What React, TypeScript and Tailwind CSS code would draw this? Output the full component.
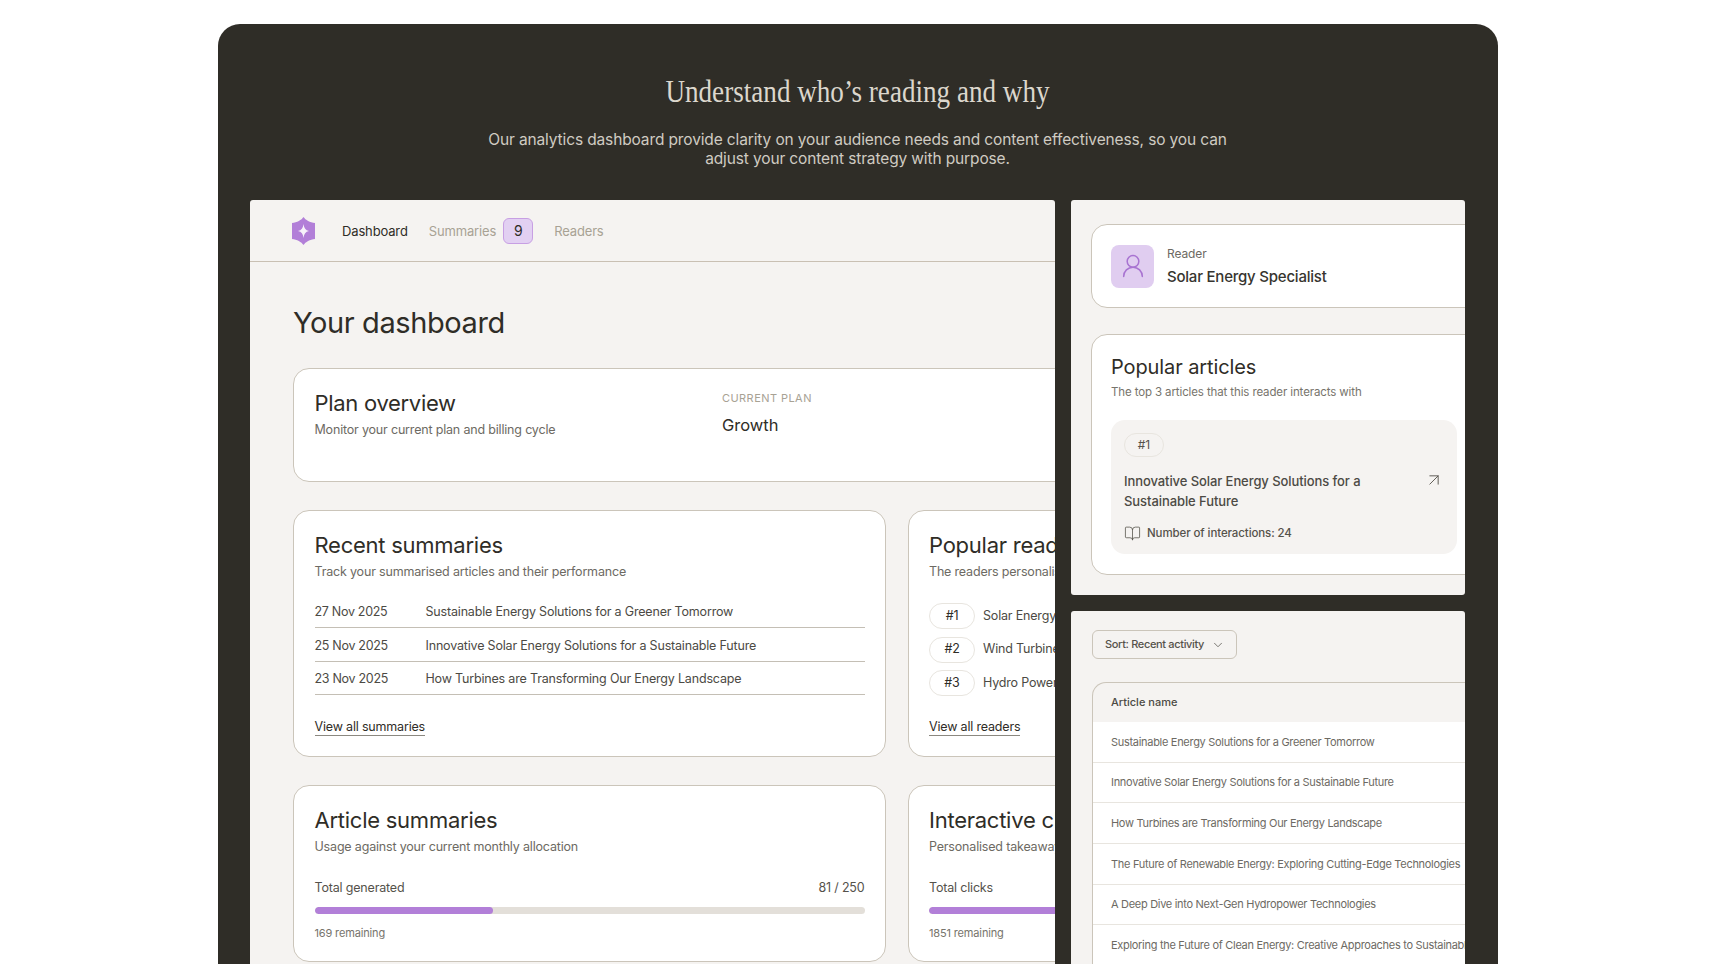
import { ArrowUpRight, BookOpen, ChevronDown, UserRound } from 'lucide-react';
import { ReactNode } from 'react';

const recent = [
  ['27 Nov 2025', 'Sustainable Energy Solutions for a Greener Tomorrow'],
  ['25 Nov 2025', 'Innovative Solar Energy Solutions for a Sustainable Future'],
  ['23 Nov 2025', 'How Turbines are Transforming Our Energy Landscape'],
];

const readers = ['Solar Energy Specialist', 'Wind Turbine Engineer', 'Hydro Power Analyst'];

const articles = [
  'Sustainable Energy Solutions for a Greener Tomorrow',
  'Innovative Solar Energy Solutions for a Sustainable Future',
  'How Turbines are Transforming Our Energy Landscape',
  'The Future of Renewable Energy: Exploring Cutting-Edge Technologies',
  'A Deep Dive into Next-Gen Hydropower Technologies',
  'Exploring the Future of Clean Energy: Creative Approaches to Sustainable Power',
];

function Logo() {
  return (
    <svg width="23" height="28" viewBox="0 0 23 28" aria-hidden="true">
      <path d="M11.5 0 C13.5 3 18 5.6 23 6 L23 22 C18 22.4 13.5 25 11.5 28 C9.5 25 5 22.4 0 22 L0 6 C5 5.6 9.5 3 11.5 0 Z" fill="#b27fd8" />
      <path d="M11.5 7 C12 11 13.5 13.3 17 14 C13.5 14.7 12 17 11.5 21 C11 17 9.5 14.7 6 14 C9.5 13.3 11 11 11.5 7 Z" fill="#f7f3fa" />
    </svg>
  );
}

function Card({ title, sub, children }: { title: string; sub: string; children: ReactNode }) {
  return (
    <section className="h-full rounded-2xl border border-[#cbc5ba] bg-white px-[20.5px] pt-[20px]">
      <h2 className="text-[22px] leading-[28px] tracking-[-0.25px] text-[#2f2d27]">{title}</h2>
      <p className="mt-[4px] text-[12.5px] leading-[18px] tracking-[-0.18px] text-[#6d6a63]">{sub}</p>
      {children}
    </section>
  );
}

function Usage({ label, value, pct, left }: { label: string; value: string; pct: string; left: string }) {
  return (
    <>
      <div className="mt-[23px] flex justify-between text-[12.5px] leading-[18px] tracking-[-0.18px] text-[#55524b]">
        <span>{label}</span>
        <span>{value}</span>
      </div>
      <div className="mt-[10px] h-[7px] overflow-hidden rounded-sm bg-[#e3dfd9]">
        <div className={pct + ' h-full rounded-sm bg-[#b27fd8]'} />
      </div>
      <p className="mt-[11px] text-[11px] leading-[16px] tracking-[-0.15px] text-[#77746c]">{left}</p>
    </>
  );
}

export default function App() {
  return (
    <div className="h-[964px] overflow-hidden bg-white pt-[24px] font-['Inter',sans-serif] text-[#2f2d27]">
      <div className="ml-[218px] h-[1000px] w-[1280px] rounded-[22px] bg-[#2f2d27] pl-[32px] pt-[48px]">
        <div className="w-[1215px]">
          <h1 className="scale-x-[0.875] text-center font-['Liberation_Serif',serif] text-[31px] leading-[40px] text-[#dcd7cd]">
            Understand who’s reading and why
          </h1>
          <p className="mx-auto mt-[18px] w-[760px] text-center text-[15.5px] leading-[19px] tracking-[-0.13px] text-[#cfcbc2]">
            Our analytics dashboard provide clarity on your audience needs and content effectiveness, so you can adjust your content strategy with purpose.
          </p>
        </div>

        <div className="mt-[32px] flex gap-[16px]">
          {/* left app window */}
          <div className="h-[800px] w-[805px] shrink-0 overflow-hidden rounded-t-[3px] bg-[#f5f3f1]">
            <nav className="flex h-[62px] items-center gap-[21px] border-b border-[#c9c0b3] pl-[42px] text-[13px] tracking-[-0.15px]">
              <div className="mr-[6px]"><Logo /></div>
              <span className="pt-[2px] text-[#2f2d27]">Dashboard</span>
              <span className="flex items-center gap-[7px] text-[#a8a294]">
                <span className="pt-[2px]">Summaries</span>
                <span className="flex h-[26px] w-[30px] items-center justify-center rounded-[6px] border border-[#c79fe3] bg-[#e2d0f2] text-[14px] text-[#2f2d27]">9</span>
              </span>
              <span className="pt-[2px] text-[#a8a294]">Readers</span>
            </nav>

            <main className="w-[1300px] pl-[43px]">
              <h2 className="mt-[43px] text-[29px] leading-[36px] tracking-[-0.4px] text-[#2f2d27]">Your dashboard</h2>

              <section className="mt-[27px] flex h-[114px] w-[1208px] rounded-2xl border border-[#cbc5ba] bg-white px-[20.5px] pt-[20px]">
                <div className="w-[407.5px]">
                  <h3 className="text-[22px] leading-[28px] tracking-[-0.3px]">Plan overview</h3>
                  <p className="mt-[4px] text-[12.5px] leading-[18px] tracking-[-0.18px] text-[#6d6a63]">Monitor your current plan and billing cycle</p>
                </div>
                <div>
                  <p className="mt-[1px] text-[11px] leading-[16px] tracking-[0.04em] text-[#a8a294]">CURRENT PLAN</p>
                  <p className="mt-[8px] text-[16.5px] leading-[22px]">Growth</p>
                </div>
              </section>

              <div className="mt-[28px] grid w-[1208px] grid-cols-[593px_593px] gap-x-[21.5px] gap-y-[28px]">
                <div className="h-[247px]">
                  <Card title="Recent summaries" sub="Track your summarised articles and their performance">
                    <div className="mt-[13.5px]">
                      {recent.map(([date, name]) => (
                        <div key={date} className="flex border-b border-[#c4bfb5] pb-[6px] pt-[8.5px] text-[12.5px] leading-[18px] tracking-[-0.18px] text-[#4c4a44]">
                          <span className="w-[111px] tracking-[-0.3px]">{date}</span>
                          <span>{name}</span>
                        </div>
                      ))}
                    </div>
                    <a className="mt-[23px] inline-block border-b border-[#8b8880] text-[12.5px] leading-[17px] tracking-[-0.18px]">View all summaries</a>
                  </Card>
                </div>
                <div className="h-[247px]">
                  <Card title="Popular readers" sub="The readers personalised summaries are generated for most">
                    <div className="mt-[22px] flex flex-col gap-[7.5px]">
                      {readers.map((reader, i) => (
                        <div key={reader} className="flex items-center gap-[8px] text-[12.5px] tracking-[-0.18px] text-[#4c4a44]">
                          <span className="flex h-[26px] w-[46px] items-center justify-center rounded-full border border-[#e8e5df] text-[#2f2d27]">#{i + 1}</span>
                          {reader}
                        </div>
                      ))}
                    </div>
                    <a className="mt-[22px] inline-block border-b border-[#8b8880] text-[12.5px] leading-[17px] tracking-[-0.18px]">View all readers</a>
                  </Card>
                </div>
                <div className="h-[177px]">
                  <Card title="Article summaries" sub="Usage against your current monthly allocation">
                    <Usage label="Total generated" value="81 / 250" pct="w-[32.4%]" left="169 remaining" />
                  </Card>
                </div>
                <div className="h-[177px]">
                  <Card title="Interactive clicks" sub="Personalised takeaways your readers clicked on">
                    <Usage label="Total clicks" value="149 / 2000" pct="w-[32.4%]" left="1851 remaining" />
                  </Card>
                </div>
              </div>
            </main>
          </div>

          {/* right column */}
          <div className="flex w-[394px] shrink-0 flex-col gap-[16px]">
            <div className="h-[395px] overflow-hidden rounded-[3px] bg-[#f5f3f1] pl-[20px] pt-[24px]">
              <div className="w-[420px]">
                <section className="flex h-[84px] items-center gap-[13px] rounded-2xl border border-[#cbc5ba] bg-white pl-[19px]">
                  <div className="flex size-[43px] items-center justify-center rounded-[8px] bg-[#e0cdf0]">
                    <UserRound size={28} strokeWidth={1.3} className="text-[#a873d1]" />
                  </div>
                  <div>
                    <p className="text-[12px] leading-[16px] tracking-[-0.1px] text-[#6d6a63]">Reader</p>
                    <p className="mt-[5px] text-[15px] leading-[20px] font-medium tracking-[-0.22px] text-[#37352f]">Solar Energy Specialist</p>
                  </div>
                </section>

                <section className="mt-[26px] h-[241px] rounded-2xl border border-[#cbc5ba] bg-white pl-[19px] pt-[19px]">
                  <h3 className="text-[20px] leading-[26px] tracking-[-0.1px]">Popular articles</h3>
                  <p className="mt-[3.5px] text-[11.5px] leading-[17px] tracking-[-0.12px] text-[#77746c]">The top 3 articles that this reader interacts with</p>
                  <div className="mt-[19.5px] h-[134px] w-[346px] rounded-[14px] bg-[#f5f3f1] px-[13px] pt-[13px]">
                    <span className="flex h-[24px] w-[40px] items-center justify-center rounded-full border border-[#e8e5df] text-[12px] text-[#55524b]">#1</span>
                    <div className="mt-[14px] flex justify-between">
                      <p className="w-[260px] text-[13px] leading-[20px] font-medium tracking-[-0.08px] text-[#4c4a44]">Innovative Solar Energy Solutions for a Sustainable Future</p>
                      <ArrowUpRight size={20} strokeWidth={1.1} className="-mt-[1px] text-[#55524b]" />
                    </div>
                    <div className="mt-[14px] flex items-center gap-[6px] text-[11.5px] font-medium tracking-[-0.1px] text-[#55524b]">
                      <BookOpen size={17} strokeWidth={1.1} />
                      Number of interactions: 24
                    </div>
                  </div>
                </section>
              </div>
            </div>

            <div className="h-[400px] overflow-hidden rounded-t-[3px] bg-[#f5f3f1] pl-[21px] pt-[19px]">
              <button className="flex h-[29px] w-[145px] items-center gap-[7px] rounded-[6px] border border-[#cbc5ba] pl-[12px] text-[11px] font-medium tracking-[-0.34px] whitespace-nowrap text-[#55524b]">
                Sort: Recent activity
                <ChevronDown size={14} strokeWidth={1.3} />
              </button>
              <div className="mt-[23px] w-[500px] overflow-hidden rounded-tl-[14px] border-l border-t border-[#cbc5ba]">
                <div className="flex h-[39px] items-center pl-[18px] text-[11px] font-medium text-[#4c4a44]">Article name</div>
                {articles.map((name) => (
                  <div key={name} className="flex h-[40.7px] items-center border-b border-[#e8e5df] bg-white pl-[18px] text-[11px] tracking-[-0.3px] whitespace-nowrap text-[#6d6a63]">
                    {name}
                  </div>
                ))}
              </div>
            </div>
          </div>
        </div>
      </div>
    </div>
  );
}
